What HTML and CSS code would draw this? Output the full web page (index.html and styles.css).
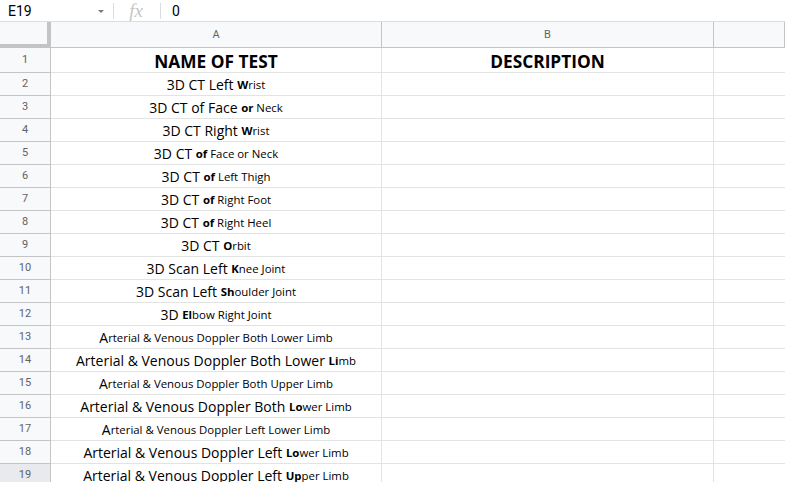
FILE: index.html
```html
<!DOCTYPE html>
<html>
<head>
<meta charset="utf-8">
<link rel="stylesheet" href="styles.css">
</head>
<body>
<div class="fbar">
  <div class="namebox"><span class="ref">E19</span><span class="caret"></span></div>
  <div class="sep"></div>
  <div class="fx">fx</div>
  <div class="sep"></div>
  <div class="val">0</div>
</div>
<div class="sheet">
  <div class="corner"></div><div class="colh">A</div><div class="colh">B</div><div class="colh last"></div>

  <div class="rowh r1">1</div><div class="cell r1 head">NAME OF TEST</div><div class="cell r1 head">DESCRIPTION</div><div class="cell r1 last"></div>

  <div class="rowh">2</div><div class="cell">3D CT Left <span class="s"><b>W</b>rist</span></div><div class="cell"></div><div class="cell last"></div>
  <div class="rowh">3</div><div class="cell">3D CT of Face <span class="s"><b>or</b> Neck</span></div><div class="cell"></div><div class="cell last"></div>
  <div class="rowh">4</div><div class="cell">3D CT Right <span class="s"><b>W</b>rist</span></div><div class="cell"></div><div class="cell last"></div>
  <div class="rowh">5</div><div class="cell">3D CT <span class="s"><b>of</b> Face or Neck</span></div><div class="cell"></div><div class="cell last"></div>
  <div class="rowh">6</div><div class="cell">3D CT <span class="s"><b>of</b> Left Thigh</span></div><div class="cell"></div><div class="cell last"></div>
  <div class="rowh">7</div><div class="cell">3D CT <span class="s"><b>of</b> Right Foot</span></div><div class="cell"></div><div class="cell last"></div>
  <div class="rowh">8</div><div class="cell">3D CT <span class="s"><b>of</b> Right Heel</span></div><div class="cell"></div><div class="cell last"></div>
  <div class="rowh">9</div><div class="cell">3D CT <span class="s"><b>O</b>rbit</span></div><div class="cell"></div><div class="cell last"></div>
  <div class="rowh">10</div><div class="cell">3D Scan Left <span class="s"><b>K</b>nee Joint</span></div><div class="cell"></div><div class="cell last"></div>
  <div class="rowh">11</div><div class="cell">3D Scan Left <span class="s"><b>Sh</b>oulder Joint</span></div><div class="cell"></div><div class="cell last"></div>
  <div class="rowh">12</div><div class="cell">3D <span class="s"><b>El</b>bow Right Joint</span></div><div class="cell"></div><div class="cell last"></div>
  <div class="rowh">13</div><div class="cell">A<span class="s">rterial &amp; Venous Doppler Both Lower Limb</span></div><div class="cell"></div><div class="cell last"></div>
  <div class="rowh">14</div><div class="cell">Arterial &amp; Venous Doppler Both Lower <span class="s"><b>Li</b>mb</span></div><div class="cell"></div><div class="cell last"></div>
  <div class="rowh">15</div><div class="cell">A<span class="s">rterial &amp; Venous Doppler Both Upper Limb</span></div><div class="cell"></div><div class="cell last"></div>
  <div class="rowh">16</div><div class="cell">Arterial &amp; Venous Doppler Both <span class="s"><b>Lo</b>wer Limb</span></div><div class="cell"></div><div class="cell last"></div>
  <div class="rowh">17</div><div class="cell">A<span class="s">rterial &amp; Venous Doppler Left Lower Limb</span></div><div class="cell"></div><div class="cell last"></div>
  <div class="rowh">18</div><div class="cell">Arterial &amp; Venous Doppler Left <span class="s"><b>Lo</b>wer Limb</span></div><div class="cell"></div><div class="cell last"></div>
  <div class="rowh sel">19</div><div class="cell">Arterial &amp; Venous Doppler Left <span class="s"><b>Up</b>per Limb</span></div><div class="cell"></div><div class="cell last"></div>
</div>
</body>
</html>
```
FILE: styles.css
```css
* { box-sizing: border-box; }
html, body { margin: 0; padding: 0; background: #fff; }
body { width: 785px; height: 482px; overflow: hidden; font-family: "Open Sans", "Noto Sans", sans-serif; color: #000; }

.fbar {
  display: flex;
  align-items: center;
  height: 22px;
  border-bottom: 1px solid #dadce0;
  font-family: Roboto, "Liberation Sans", sans-serif;
}
.namebox {
  width: 113px;
  display: flex;
  align-items: center;
  justify-content: space-between;
  padding: 0 9px 0 8px;
  font-size: 14px;
  color: #000;
}
.caret {
  width: 0; height: 0;
  border-left: 3px solid transparent;
  border-right: 3px solid transparent;
  border-top: 3px solid #7a7a7a;
  margin-top: 2px;
}
.sep { width: 1px; height: 16px; background: #dadce0; }
.fx {
  width: 46px;
  text-align: center;
  font-family: "Liberation Serif", serif;
  font-style: italic;
  font-size: 19px;
  color: #c4c7c5;
  line-height: 20px;
  padding-right: 2px;
}
.val { padding-left: 11px; font-size: 14px; }

.sheet {
  display: grid;
  grid-template-columns: 51px 331px 332px 1fr;
  grid-auto-rows: 23px;
  grid-template-rows: 26px 25px;
}
.corner {
  background: #f8f9fa;
  border-right: 4px solid #c4c4c4;
  border-bottom: 4px solid #c4c4c4;
}
.colh {
  background: #f8f9fa;
  border-right: 1px solid #c4c4c4;
  border-bottom: 1px solid #c4c4c4;
  display: flex;
  align-items: center;
  justify-content: center;
  font-family: Roboto, "Liberation Sans", sans-serif;
  font-size: 11px;
  color: #5f6368;
}
.rowh {
  background: #f8f9fa;
  border-right: 1px solid #c4c4c4;
  border-bottom: 1px solid #c4c4c4;
  display: flex;
  align-items: center;
  justify-content: center;
  font-family: Roboto, "Liberation Sans", sans-serif;
  font-size: 11px;
  color: #5f6368;
  padding-bottom: 1px;
}
.rowh.sel { background: #e8eaed; }
.cell {
  border-right: 1px solid #e2e3e3;
  border-bottom: 1px solid #e2e3e3;
  display: flex;
  align-items: center;
  justify-content: center;
  white-space: pre;
  font-size: 14px;
  overflow: hidden;
}
.cell.last { border-right: none; }
.cell.head { font-size: 17.3px; font-weight: 700; padding-top: 2px; }
.s { font-size: 11.4px; }
.s b { font-weight: 700; }
```
